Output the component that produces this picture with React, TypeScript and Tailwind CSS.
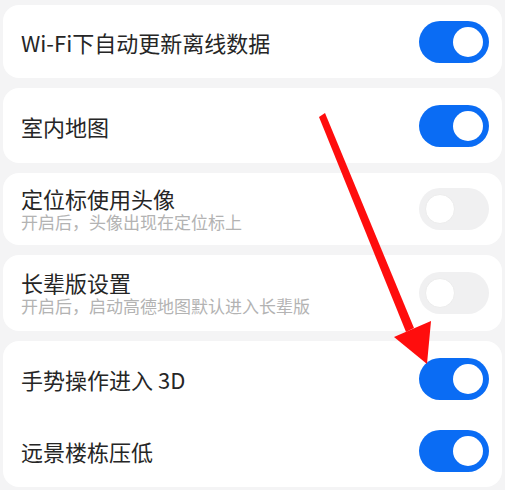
const font = { fontFamily: '"Noto Sans CJK SC", "Noto Sans", sans-serif' };

function Toggle({ on }: { on: boolean }) {
  if (on) {
    return (
      <div className="flex h-[42px] w-[70px] shrink-0 items-center justify-end rounded-full bg-[#0a6cf4] pr-[6px]">
        <div className="h-[30px] w-[30px] rounded-full bg-white" />
      </div>
    );
  }
  return (
    <div className="flex h-[42px] w-[70px] shrink-0 items-center justify-start rounded-full bg-[#f0f0f1] pl-[6px]">
      <div className="h-[30px] w-[30px] rounded-full border border-[#ececec] bg-white" />
    </div>
  );
}

function Row({
  title,
  sub,
  on,
  h,
}: {
  title: string;
  sub?: string;
  on: boolean;
  h: string;
}) {
  return (
    <div className={`flex items-center justify-between pl-[18px] pr-[13px] ${h}`}>
      <div className="flex flex-col">
        <span className="text-[22px] leading-[26px] text-[#262626]">{title}</span>
        {sub && (
          <span className="text-[17px] leading-[22px] text-[#b3b3b3]">{sub}</span>
        )}
      </div>
      <Toggle on={on} />
    </div>
  );
}

export default function App() {
  return (
    <div
      className="relative flex h-[490px] w-[505px] flex-col gap-[10px] overflow-hidden bg-[#f4f4f5] px-[3px] pt-[5px]"
      style={font}
    >
      <div className="rounded-[16px] bg-white">
        <Row title="Wi-Fi下自动更新离线数据" on h="h-[73px]" />
      </div>
      <div className="rounded-[16px] bg-white">
        <Row title="室内地图" on h="h-[75px]" />
      </div>
      <div className="rounded-[16px] bg-white">
        <Row title="定位标使用头像" sub="开启后，头像出现在定位标上" on={false} h="h-[72px]" />
      </div>
      <div className="rounded-[16px] bg-white">
        <Row title="长辈版设置" sub="开启后，启动高德地图默认进入长辈版" on={false} h="h-[76px]" />
      </div>
      <div className="flex flex-col rounded-[16px] bg-white pt-[2px]">
        <Row title="手势操作进入 3D" on h="h-[72px]" />
        <Row title="远景楼栋压低" on h="h-[72px]" />
      </div>

      <svg className="pointer-events-none absolute left-0 top-0" width="505" height="490" viewBox="0 0 505 490">
        <polygon points="319,117 325,113 414,328 406,332" fill="#ff0d0d" />
        <polygon points="394,337 431,321 427,364" fill="#ff0d0d" />
      </svg>
    </div>
  );
}
